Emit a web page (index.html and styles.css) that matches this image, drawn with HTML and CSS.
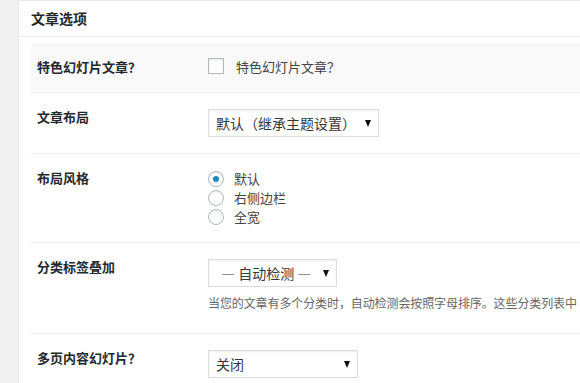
FILE: index.html
```html
<!DOCTYPE html>
<html lang="zh-CN">
<head>
  <meta charset="UTF-8">
  <title>文章选项</title>
  <link rel="stylesheet" href="styles.css">
</head>
<body>

<div class="postbox">

  <!--标题-->
  <h2 class="hndle">文章选项</h2>

  <div class="inside">

    <div class="row row-alt">
      <div class="label">特色幻灯片文章？</div>
      <div class="field field-check">
        <label class="check">
          <input type="checkbox">
          <span>特色幻灯片文章？</span>
        </label>
      </div>
    </div>

    <div class="row">
      <div class="label">文章布局</div>
      <div class="field">
        <div class="select w-layout"><span>默认（继承主题设置）</span><i class="arr"></i></div>
      </div>
    </div>

    <div class="row">
      <div class="label">布局风格</div>
      <div class="field field-radio">
        <label class="radio"><input type="radio" name="style" checked><span>默认</span></label>
        <label class="radio"><input type="radio" name="style"><span>右侧边栏</span></label>
        <label class="radio"><input type="radio" name="style"><span>全宽</span></label>
      </div>
    </div>

    <div class="row">
      <div class="label">分类标签叠加</div>
      <div class="field">
        <div class="select w-cat"><span class="pad">— 自动检测 —</span><i class="arr"></i></div>
        <p class="description">当您的文章有多个分类时，自动检测会按照字母排序。这些分类列表中</p>
      </div>
    </div>

    <div class="row">
      <div class="label">多页内容幻灯片？</div>
      <div class="field">
        <div class="select w-slide"><span>关闭</span><i class="arr"></i></div>
      </div>
    </div>

  </div>
</div>

</body>
</html>
```

FILE: styles.css
```css
* {
  margin: 0;
  padding: 0;
  box-sizing: border-box;
}

html,
body {
  overflow: hidden;
}

body {
  background-color: #f1f1f1;
  font-family: "Noto Sans CJK SC", "Liberation Sans", sans-serif;
  font-size: 13px;
  color: #444;
}

/*外框，右边超出窗口*/
.postbox {
  width: 820px;
  height: 400px;
  margin-left: 18px;
  background-color: #fff;
  border: 1px solid #e5e5e5;
  border-right: none;
  border-bottom: none;
}

.hndle {
  height: 36px;
  line-height: 35px;
  padding-left: 12px;
  font-size: 14px;
  font-weight: 700;
  color: #23282d;
  border-bottom: 1px solid #eee;
}

.inside {
  padding: 6px 0 0 12px;
}

/*每一行*/
.row {
  display: flex;
  padding: 15px 0 16px;
  border-bottom: 1px solid #eee;
}

.row-alt {
  background-color: #f9f9f9;
}

.label {
  width: 177px;
  flex-shrink: 0;
  padding-left: 6px;
  line-height: 18px;
  font-weight: 700;
  color: #23282d;
}

.field {
  flex: 1;
  padding-top: 1px;
}

.field-check,
.field-radio {
  padding-top: 0;
}

/*复选框*/
.check {
  display: flex;
  align-items: flex-start;
  line-height: 18px;
}

.check input,
.radio input {
  -webkit-appearance: none;
  appearance: none;
  width: 16px;
  height: 16px;
  border: 1px solid #b4b9be;
  background-color: #fff;
  box-shadow: inset 0 1px 2px rgba(0, 0, 0, .1);
  flex-shrink: 0;
}

.check span {
  margin-left: 12px;
  color: #444;
}

/*单选框*/
.radio {
  display: flex;
  align-items: center;
  height: 19px;
}

.radio input {
  border-radius: 50%;
  position: relative;
}

.radio input:checked::before {
  content: "";
  position: absolute;
  left: 4px;
  top: 4px;
  width: 6px;
  height: 6px;
  border-radius: 50%;
  background-color: #1e8cbe;
}

.radio span {
  margin-left: 10px;
}

/*下拉框*/
.select {
  display: flex;
  align-items: center;
  height: 28px;
  padding-left: 7px;
  border: 1px solid #ddd;
  background-color: #fff;
  box-shadow: inset 0 1px 2px rgba(0, 0, 0, .07);
  font-size: 14px;
  color: #32373c;
}

.select .pad {
  padding-left: 5px;
}

.arr {
  margin-left: auto;
  margin-right: 7px;
  width: 0;
  height: 0;
  border-left: 3.5px solid transparent;
  border-right: 3.5px solid transparent;
  border-top: 7px solid #111;
}

.w-layout {
  width: 171px;
}

.w-cat {
  width: 129px;
}

.w-slide {
  width: 150px;
}

.description {
  margin: 7px 0 5px;
  line-height: 18px;
  font-size: 12px;
  letter-spacing: -0.1px;
  color: #666;
  white-space: nowrap;
}
```
